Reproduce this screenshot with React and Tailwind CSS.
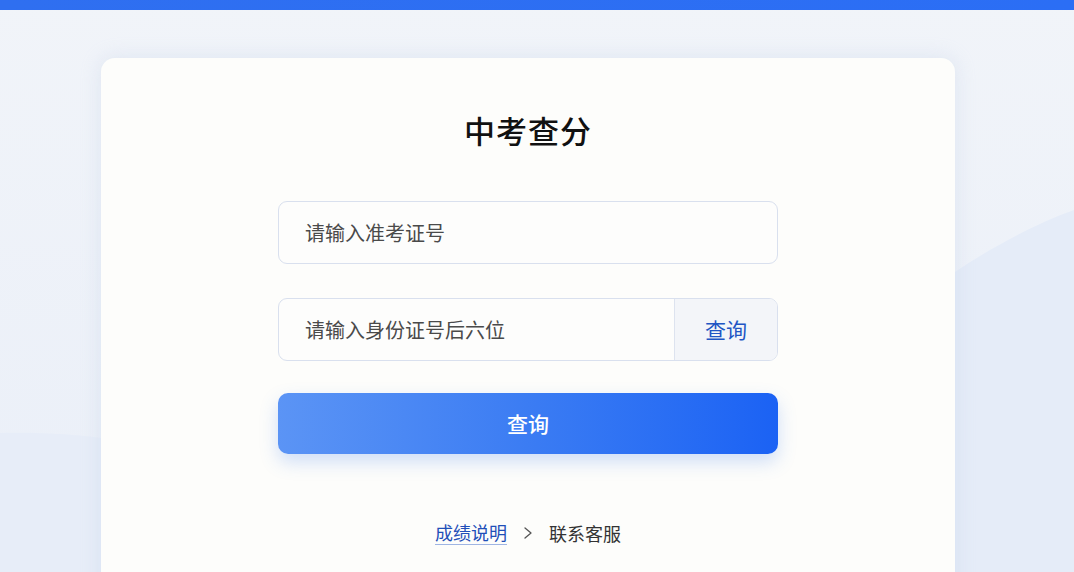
import React, { useState } from "react";

export default function App() {
  const [ticket, setTicket] = useState("");
  const [idTail, setIdTail] = useState("");

  return (
    <div
      className="relative h-[572px] w-full overflow-hidden bg-gradient-to-b from-[#f1f4f9] to-[#eaeff8]"
      style={{ fontFamily: '"Noto Sans CJK SC", "Noto Sans", sans-serif' }}
    >
      {/* background waves */}
      <svg className="absolute inset-0 h-full w-full" viewBox="0 0 1074 572" preserveAspectRatio="none">
        <path d="M955 272 C 995 245, 1040 222, 1074 210 L1074 572 L955 572 Z" fill="#e5ecf8" />
        <path d="M0 433 C 40 432, 80 435, 101 438 L101 572 L0 572 Z" fill="#e7edf8" />
      </svg>

      {/* top bar */}
      <div className="relative h-[10px] bg-gradient-to-r from-[#2f6ff0] to-[#2b6ef5]" />

      <div className="relative ml-[101px] mt-[48px] h-[560px] w-[854px] rounded-[14px] bg-[#fdfdfb] shadow-[0_0_20px_rgba(180,195,225,0.3)]">
        <div className="flex flex-col items-center pt-[52px]">
          <h1 className="text-[31px] font-medium leading-[40px] tracking-[1px] text-[#111]">中考查分</h1>

          <div className="mt-[51px] w-[500px]">
            <input
              value={ticket}
              onChange={(e) => setTicket(e.target.value)}
              placeholder="请输入准考证号"
              className="h-[63px] w-full rounded-[9px] border border-[#d9e0ee] bg-[#fdfdfc] px-[26px] text-[20px] text-[#333] outline-none placeholder:text-[#4a4a4a]"
            />

            <div className="mt-[34px] flex h-[63px] w-full overflow-hidden rounded-[9px] border border-[#d9e0ee] bg-[#fdfdfc]">
              <input
                value={idTail}
                onChange={(e) => setIdTail(e.target.value)}
                placeholder="请输入身份证号后六位"
                className="min-w-0 flex-1 bg-transparent px-[26px] text-[20px] text-[#333] outline-none placeholder:text-[#4a4a4a]"
              />
              <button className="w-[103px] border-l border-[#dde3ef] bg-[#f3f5f9] text-[21px] text-[#2155c4]">
                查询
              </button>
            </div>

            <button className="mt-[32px] h-[61px] w-full rounded-[10px] bg-gradient-to-r from-[#5b94f5] via-[#3b7cf3] to-[#1b62f4] text-[21px] font-medium text-white shadow-[0_8px_18px_rgba(70,130,240,0.25)]">
              查询
            </button>
          </div>

          <div className="mt-[66px] flex items-center text-[18px] leading-[24px]">
            <a className="border-b border-[#9fb5e3] text-[#1f4fb8]">成绩说明</a>
            <svg className="mx-[15px]" width="12" height="14" viewBox="0 0 12 14" fill="none">
              <path d="M3 2 L9 7 L3 12" stroke="#555" strokeWidth="1.3" strokeLinecap="round" strokeLinejoin="round" />
            </svg>
            <span className="text-[#333]">联系客服</span>
          </div>
        </div>
      </div>
    </div>
  );
}
